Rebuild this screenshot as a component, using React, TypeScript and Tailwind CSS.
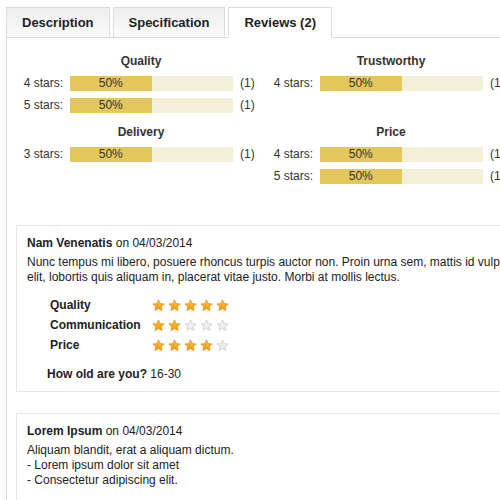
import React from "react";

const summary = [
  [
    { title: "Quality", rows: [{ label: "4 stars:", pct: 50, count: 1 }, { label: "5 stars:", pct: 50, count: 1 }] },
    { title: "Trustworthy", rows: [{ label: "4 stars:", pct: 50, count: 1 }] },
  ],
  [
    { title: "Delivery", rows: [{ label: "3 stars:", pct: 50, count: 1 }] },
    { title: "Price", rows: [{ label: "4 stars:", pct: 50, count: 1 }, { label: "5 stars:", pct: 50, count: 1 }] },
  ],
];

function Star({ on }: { on: boolean }) {
  return (
    <svg width="13" height="13" viewBox="0 0 24 24">
      <defs>
        <linearGradient id="starOn" x1="0" y1="0" x2="0" y2="1">
          <stop offset="0" stopColor="#fdc54b" />
          <stop offset="1" stopColor="#f29400" />
        </linearGradient>
      </defs>
      <path
        d="M12 1.5l3.1 6.9 7.4.7-5.6 5 1.7 7.4L12 17.6l-6.6 3.9 1.7-7.4-5.6-5 7.4-.7z"
        fill={on ? "url(#starOn)" : "#ececec"}
        stroke={on ? "#e38a00" : "#c8c8c8"}
        strokeWidth="1.2"
        strokeLinejoin="round"
      />
    </svg>
  );
}

function Stars({ value }: { value: number }) {
  return (
    <div className="flex gap-[3px]">
      {[1, 2, 3, 4, 5].map((i) => (
        <Star key={i} on={i <= value} />
      ))}
    </div>
  );
}

function Group({ title, rows }: { title: string; rows: { label: string; pct: number; count: number }[] }) {
  return (
    <div className="w-[250px] mb-[5px]">
      <div className="h-[22px] leading-[22px] text-center font-bold">{title}</div>
      {rows.map((r, i) => (
        <div key={i} className="h-[22px] flex items-center">
          <span className="w-[47px] text-right">{r.label}</span>
          <div className="ml-[7px] w-[163px] h-[15px] bg-[#f3efd9] flex">
            <div className="h-full bg-[#e4c75b] text-center leading-[15px]" style={{ width: `${r.pct}%` }}>
              {r.pct}%
            </div>
          </div>
          <span className="ml-[7px]">({r.count})</span>
        </div>
      ))}
    </div>
  );
}

export default function App() {
  return (
    <div className="w-[500px] h-[500px] overflow-hidden bg-white text-[12px] text-[#333] font-['Liberation_Sans',Arial,sans-serif]">
      <div className="pt-[7px] pl-[6px] w-[570px]">
        {/* tabs */}
        <div className="flex gap-[3px] -mb-px relative z-10 text-[13px] font-bold text-[#222]">
          <div className="h-[31px] px-[15px] leading-[29px] border border-[#dcdcdc] bg-gradient-to-b from-[#eeeeee] to-[#fbfbfb]">Description</div>
          <div className="h-[31px] px-[15px] leading-[29px] border border-[#dcdcdc] bg-gradient-to-b from-[#eeeeee] to-[#fbfbfb]">Specification</div>
          <div className="h-[31px] px-[15px] leading-[29px] border border-[#dcdcdc] border-b-white bg-white">Reviews (2)</div>
        </div>

        <div className="w-[555px] border border-[#dcdcdc] pl-[9px] pr-[9px] pt-[12px] pb-[20px]">
          {/* summary */}
          <div className="mb-[33px]">
            {summary.map((line, i) => (
              <div key={i} className="flex items-start">
                {line.map((g) => (
                  <Group key={g.title} title={g.title} rows={g.rows} />
                ))}
              </div>
            ))}
          </div>

          {/* review 1 */}
          <div className="border border-[#e6e6e6] px-[10px] pt-[10px] pb-[9px] text-[#222]">
            <div className="leading-[15px]">
              <b>Nam Venenatis</b> on 04/03/2014
            </div>
            <p className="mt-[4px] leading-[15px]">
              Nunc tempus mi libero, posuere rhoncus turpis auctor non. Proin urna sem, mattis id vulputate elit, lobortis quis aliquam in, placerat vitae justo. Morbi at mollis lectus.
            </p>
            <div className="mt-[10px] pl-[23px]">
              {[
                ["Quality", 5],
                ["Communication", 2],
                ["Price", 4],
              ].map(([label, v]) => (
                <div key={label as string} className="h-[20px] flex items-center">
                  <span className="w-[102px] font-bold">{label}</span>
                  <Stars value={v as number} />
                </div>
              ))}
            </div>
            <div className="mt-[12px] pl-[20px] leading-[15px]">
              <b>How old are you?</b> 16-30
            </div>
          </div>

          {/* review 2 */}
          <div className="mt-[21px] border border-[#e6e6e6] px-[10px] pt-[10px] pb-[12px] text-[#222]">
            <div className="leading-[15px]">
              <b>Lorem Ipsum</b> on 04/03/2014
            </div>
            <p className="mt-[4px] leading-[15px]">
              Aliquam blandit, erat a aliquam dictum.
              <br />- Lorem ipsum dolor sit amet
              <br />- Consectetur adipiscing elit.
            </p>
          </div>
        </div>
      </div>
    </div>
  );
}
